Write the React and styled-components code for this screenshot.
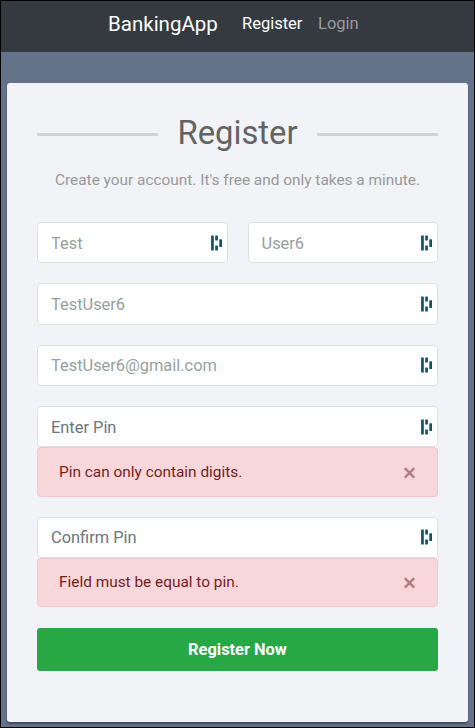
import React from "react";
import styled, { createGlobalStyle } from "styled-components";

const GlobalStyle = createGlobalStyle`
  *, *::before, *::after { box-sizing: border-box; }
  body { margin: 0; background: #64748b; font-family: Roboto, "Liberation Sans", sans-serif; }
`;

const Page = styled.div`
  height: 728px;
  border: 1px solid #000;
  background: #63738a;
  overflow: hidden;
`;

const Navbar = styled.nav`
  height: 51px;
  padding: 0 0 5px 107px;
  display: flex;
  align-items: center;
  background: #343a40;
`;

const Brand = styled.a`
  width: 134px;
  font-size: 20.5px;
  line-height: 30px;
  color: #fff;
`;

const NavLink = styled.a`
  width: 76px;
  font-size: 16.5px;
  line-height: 24px;
  color: ${(p) => (p.$active ? "#fff" : "#999c9f")};
`;

const Card = styled.form`
  margin: 31px 6px 0;
  height: 639px;
  padding: 30px 30px 0;
  border-radius: 3px;
  background: #f1f3f7;
  box-shadow: 0 2px 2px rgba(0, 0, 0, 0.35);
`;

const Heading = styled.h2`
  margin: 0;
  height: 40px;
  display: flex;
  align-items: center;
  justify-content: space-between;
  font-size: 32.8px;
  font-weight: 400;
  line-height: 40px;
  color: #636363;
`;

const Rule = styled.span`
  width: 121px;
  height: 3px;
  margin-top: 3px;
  background: #d4d4d4;
`;

const Hint = styled.p`
  margin: 15px 0 30px;
  font-size: 15.4px;
  line-height: 24px;
  text-align: center;
  white-space: nowrap;
  color: #999;
`;

const Row = styled.div`
  display: grid;
  grid-template-columns: ${(p) => (p.$split ? "repeat(2, minmax(0, 1fr))" : "minmax(0, 1fr)")};
  column-gap: 20px;
  margin-bottom: 20.2px;
`;

const Control = styled.div`
  height: 41.2px;
  padding: 0 4px 0 13px;
  display: flex;
  align-items: center;
  border: 1px solid #dde1e5;
  border-radius: 4px;
  background: #fff;
`;

const Input = styled.input`
  flex: 1;
  min-width: 0;
  height: 39px;
  padding: 1px 0 0;
  border: 0;
  outline: 0;
  background: transparent;
  font: 400 16.4px Roboto, "Liberation Sans", sans-serif;
  color: #969fa0;
  &::placeholder { color: #6c757d; opacity: 1; }
`;

const Alert = styled.div`
  height: 49.4px;
  padding: 0 21px;
  display: flex;
  align-items: center;
  justify-content: space-between;
  border: 1px solid #f5c6cb;
  border-radius: 4px;
  background: #f8d7da;
  font-size: 15.4px;
  color: #721c24;
`;

const AlertText = styled.span`
  margin-bottom: 1px;
`;

const Submit = styled.button`
  width: 100%;
  height: 43px;
  padding: 0;
  border: 0;
  border-radius: 3px;
  background: #28a745;
  font: 700 16.4px Roboto, "Liberation Sans", sans-serif;
  color: #fff;
`;

const KeyIcon = () => (
  <svg width="12" height="16" viewBox="0 0 12 16" fill="#0e5464">
    <rect x="0.1" y="0.6" width="2.7" height="15" rx="0.5" />
    <rect x="4.2" y="0.6" width="2.7" height="5" rx="0.5" />
    <rect x="4.2" y="10.4" width="2.7" height="5.2" rx="0.5" />
    <rect x="8.3" y="4.3" width="2.7" height="7.6" rx="0.5" />
  </svg>
);

const CloseIcon = () => (
  <svg width="13" height="13" viewBox="0 0 13 13" stroke="#b57a80" strokeWidth="2.4">
    <path d="M1.8 2.2 L11.2 11.6 M11.2 2.2 L1.8 11.6" />
  </svg>
);

const Field = (props) => (
  <Control>
    <Input {...props} />
    <KeyIcon />
  </Control>
);

const PinField = ({ placeholder, error }) => (
  <Row>
    <Field placeholder={placeholder} />
    <Alert role="alert">
      <AlertText>{error}</AlertText>
      <CloseIcon />
    </Alert>
  </Row>
);

export default function App() {
  return (
    <>
      <GlobalStyle />
      <Page>
        <Navbar>
          <Brand>BankingApp</Brand>
          <NavLink $active>Register</NavLink>
          <NavLink>Login</NavLink>
        </Navbar>
        <Card>
          <Heading>
            <Rule />
            Register
            <Rule />
          </Heading>
          <Hint>Create your account. It's free and only takes a minute.</Hint>
          <Row $split>
            <Field defaultValue="Test" />
            <Field defaultValue="User6" />
          </Row>
          <Row>
            <Field defaultValue="TestUser6" />
          </Row>
          <Row>
            <Field defaultValue="TestUser6@gmail.com" />
          </Row>
          <PinField placeholder="Enter Pin" error="Pin can only contain digits." />
          <PinField placeholder="Confirm Pin" error="Field must be equal to pin." />
          <Submit type="button">Register Now</Submit>
        </Card>
      </Page>
    </>
  );
}
